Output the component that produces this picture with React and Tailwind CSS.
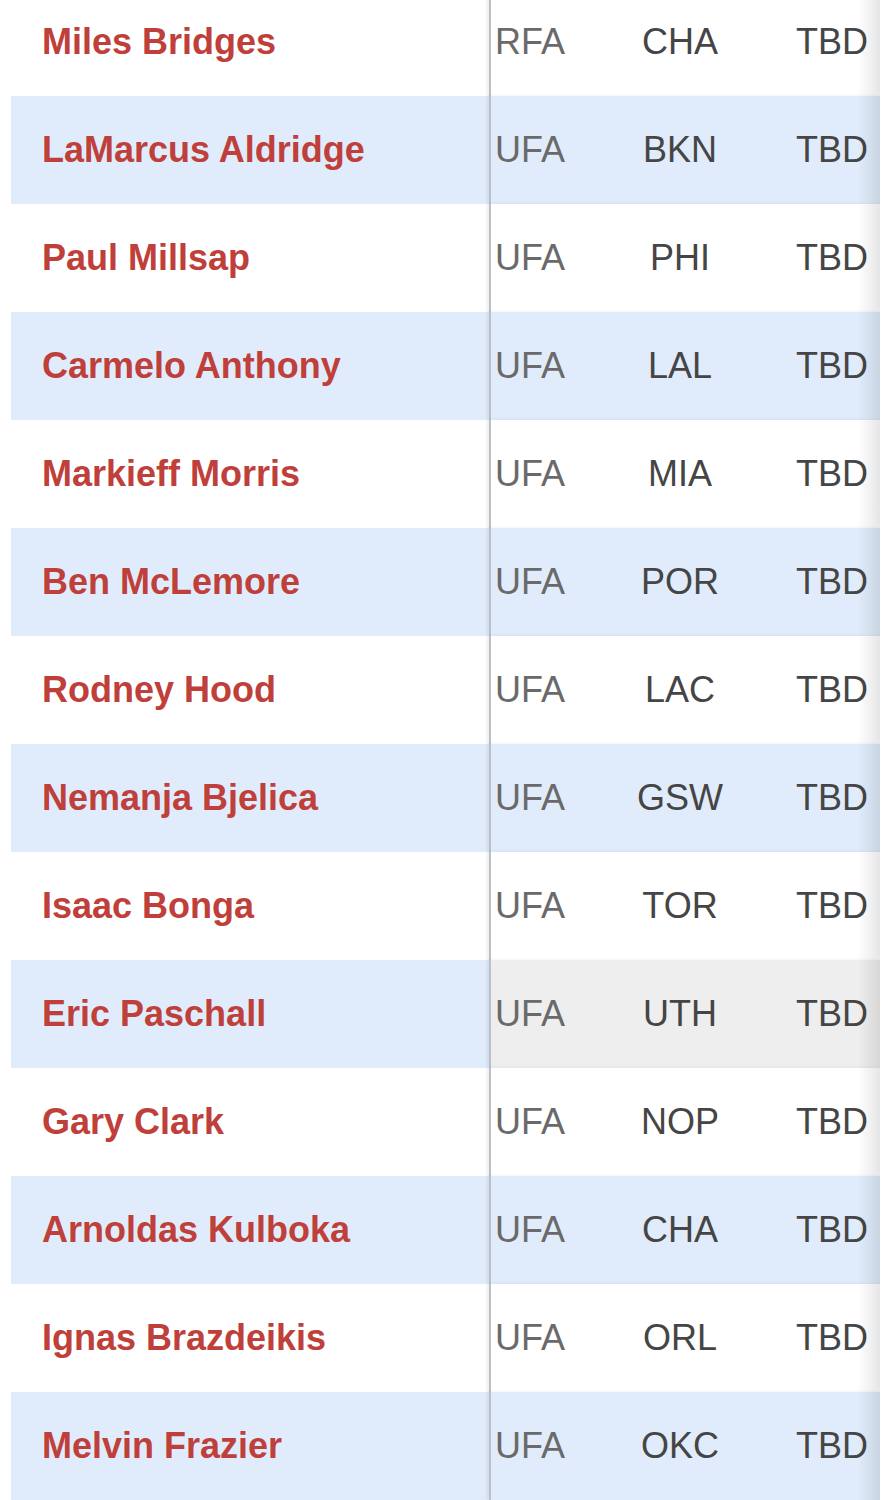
const players = [
  { name: 'Miles Bridges', status: 'RFA', team: 'CHA' },
  { name: 'LaMarcus Aldridge', status: 'UFA', team: 'BKN' },
  { name: 'Paul Millsap', status: 'UFA', team: 'PHI' },
  { name: 'Carmelo Anthony', status: 'UFA', team: 'LAL' },
  { name: 'Markieff Morris', status: 'UFA', team: 'MIA' },
  { name: 'Ben McLemore', status: 'UFA', team: 'POR' },
  { name: 'Rodney Hood', status: 'UFA', team: 'LAC' },
  { name: 'Nemanja Bjelica', status: 'UFA', team: 'GSW' },
  { name: 'Isaac Bonga', status: 'UFA', team: 'TOR' },
  { name: 'Eric Paschall', status: 'UFA', team: 'UTH', hover: true },
  { name: 'Gary Clark', status: 'UFA', team: 'NOP' },
  { name: 'Arnoldas Kulboka', status: 'UFA', team: 'CHA' },
  { name: 'Ignas Brazdeikis', status: 'UFA', team: 'ORL' },
  { name: 'Melvin Frazier', status: 'UFA', team: 'OKC' },
]

const App = () => {
  return (
    <div className="min-h-screen bg-white overflow-hidden font-['Liberation_Sans',Arial,sans-serif]">
      <div className="relative ml-[11px] w-[869px] -mt-[12px]">
        {players.map((p, i) => {
          const striped = i % 2 === 1
          const rowBg = striped ? 'bg-[#e0ecfb]' : 'bg-white'
          return (
            <div key={p.name} className="flex h-[108px]">
              <div className={`w-[478px] flex items-center pl-[31px] ${rowBg}`}>
                <span className="text-[36px] font-bold text-[#bf403a]">{p.name}</span>
              </div>
              <div className={`flex flex-1 items-center text-[36px] border-l-2 border-[#bcc1c7] shadow-[-2px_0_3px_rgba(0,0,0,0.08)] ${p.hover ? 'bg-[#eeeeee]' : rowBg}`}>
                <div className="w-[118px] pl-[4px] text-[#6a6a6a]">{p.status}</div>
                <div className="w-[142px] text-center text-[#454545]">{p.team}</div>
                <div className="flex-1 text-right pr-[12px] text-[#454545]">TBD</div>
              </div>
            </div>
          )
        })}
        <div className="pointer-events-none absolute top-0 right-0 h-full w-[22px] bg-gradient-to-r from-transparent to-black/10" />
      </div>
    </div>
  )
}

export default App
